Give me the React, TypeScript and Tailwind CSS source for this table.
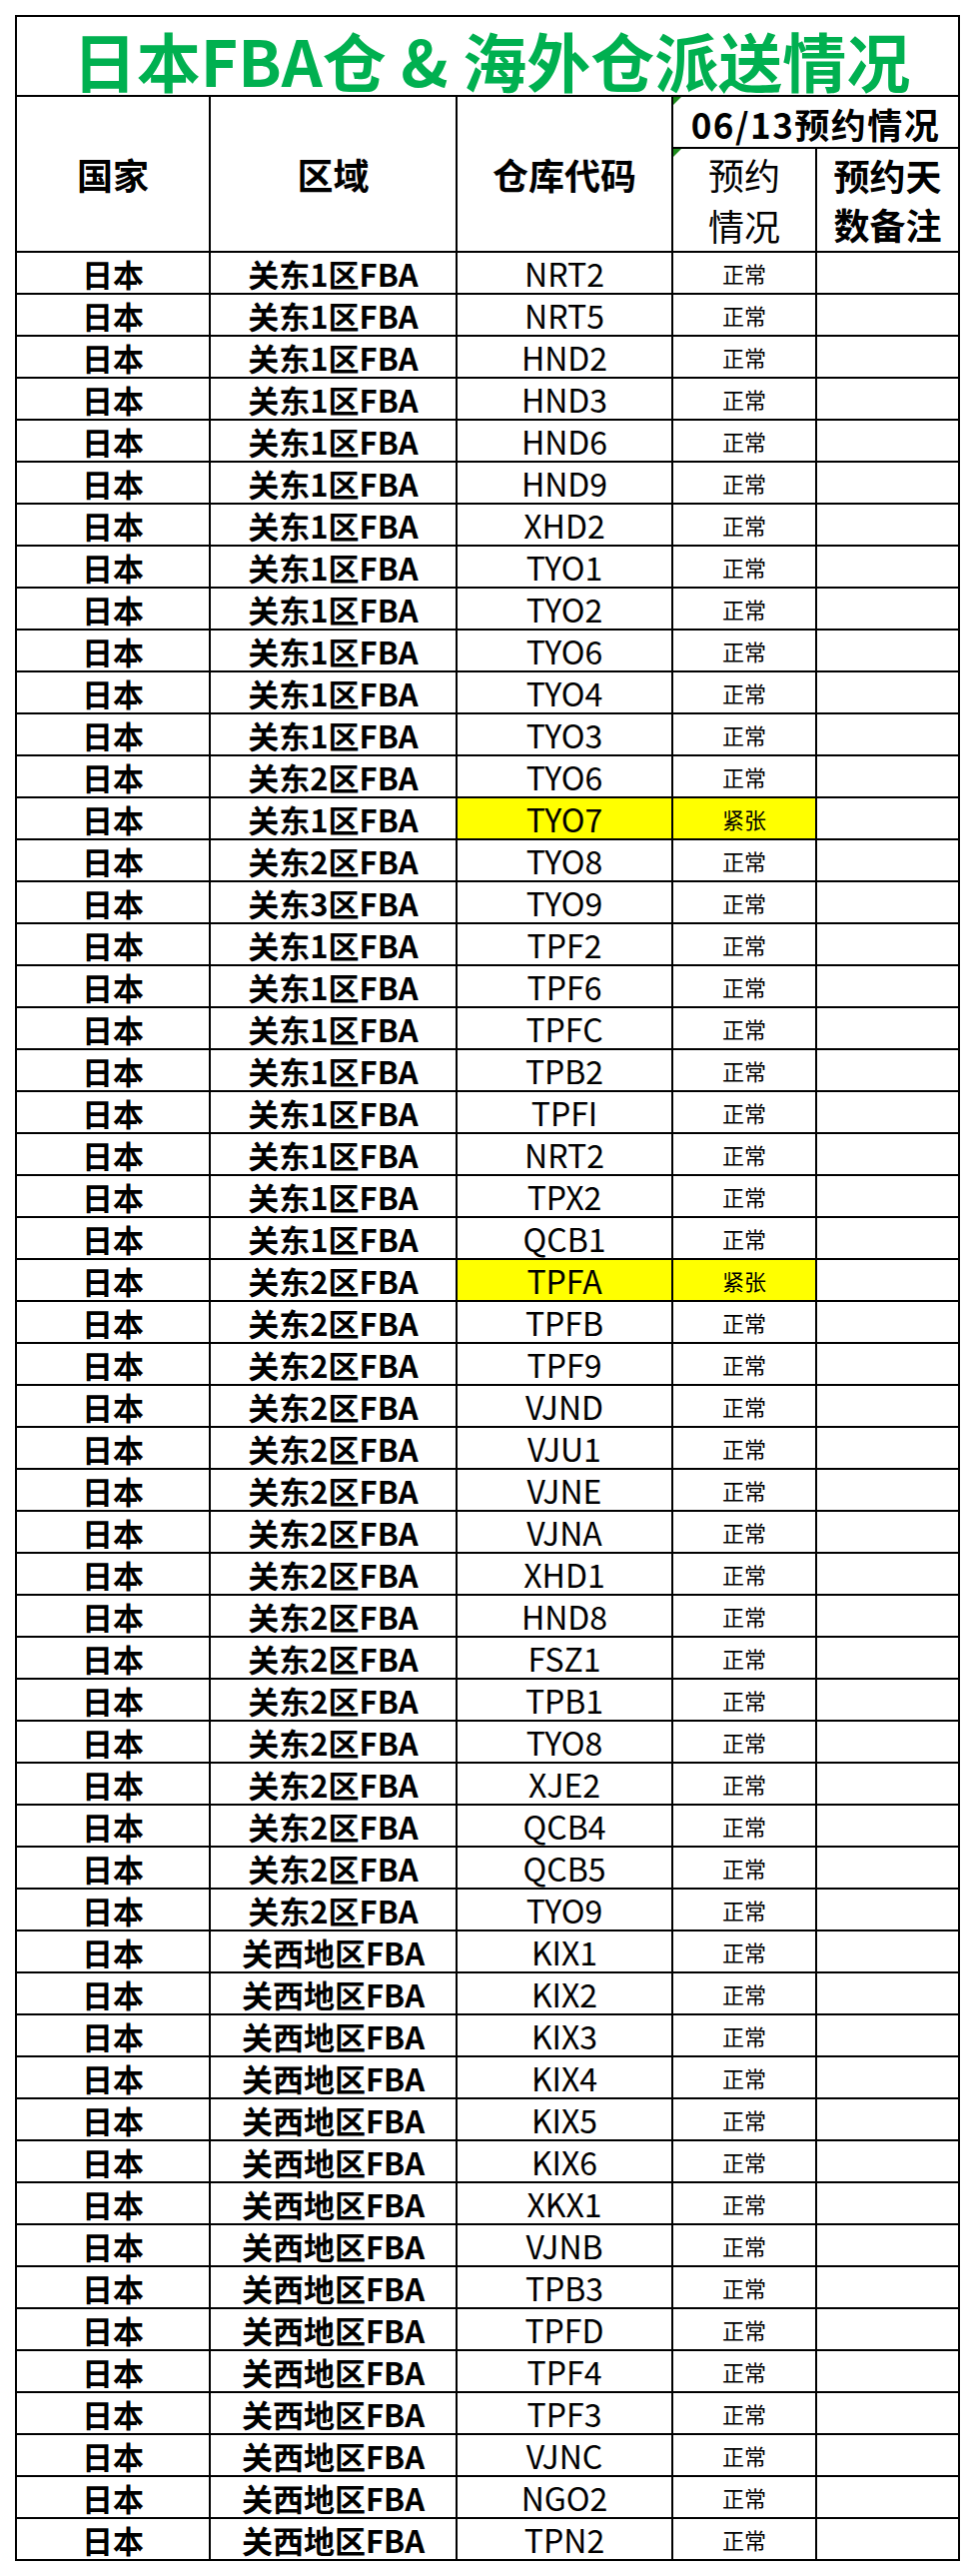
import React from "react";

type Row = [string, string, string];

const K1 = "关东1区FBA";
const K2 = "关东2区FBA";
const K3 = "关东3区FBA";
const KS = "关西地区FBA";

const rows: Row[] = [
  [K1, "NRT2", "正常"],
  [K1, "NRT5", "正常"],
  [K1, "HND2", "正常"],
  [K1, "HND3", "正常"],
  [K1, "HND6", "正常"],
  [K1, "HND9", "正常"],
  [K1, "XHD2", "正常"],
  [K1, "TYO1", "正常"],
  [K1, "TYO2", "正常"],
  [K1, "TYO6", "正常"],
  [K1, "TYO4", "正常"],
  [K1, "TYO3", "正常"],
  [K2, "TYO6", "正常"],
  [K1, "TYO7", "紧张"],
  [K2, "TYO8", "正常"],
  [K3, "TYO9", "正常"],
  [K1, "TPF2", "正常"],
  [K1, "TPF6", "正常"],
  [K1, "TPFC", "正常"],
  [K1, "TPB2", "正常"],
  [K1, "TPFI", "正常"],
  [K1, "NRT2", "正常"],
  [K1, "TPX2", "正常"],
  [K1, "QCB1", "正常"],
  [K2, "TPFA", "紧张"],
  [K2, "TPFB", "正常"],
  [K2, "TPF9", "正常"],
  [K2, "VJND", "正常"],
  [K2, "VJU1", "正常"],
  [K2, "VJNE", "正常"],
  [K2, "VJNA", "正常"],
  [K2, "XHD1", "正常"],
  [K2, "HND8", "正常"],
  [K2, "FSZ1", "正常"],
  [K2, "TPB1", "正常"],
  [K2, "TYO8", "正常"],
  [K2, "XJE2", "正常"],
  [K2, "QCB4", "正常"],
  [K2, "QCB5", "正常"],
  [K2, "TYO9", "正常"],
  [KS, "KIX1", "正常"],
  [KS, "KIX2", "正常"],
  [KS, "KIX3", "正常"],
  [KS, "KIX4", "正常"],
  [KS, "KIX5", "正常"],
  [KS, "KIX6", "正常"],
  [KS, "XKX1", "正常"],
  [KS, "VJNB", "正常"],
  [KS, "TPB3", "正常"],
  [KS, "TPFD", "正常"],
  [KS, "TPF4", "正常"],
  [KS, "TPF3", "正常"],
  [KS, "VJNC", "正常"],
  [KS, "NGO2", "正常"],
  [KS, "TPN2", "正常"],
];

const font = { fontFamily: '"Noto Sans CJK SC", "Noto Sans", sans-serif' };

function Tri() {
  return (
    <span className="absolute left-0 top-0 h-0 w-0 border-t-[8px] border-r-[8px] border-t-[#1e8c1e] border-r-transparent" />
  );
}

export default function App() {
  return (
    <div className="min-h-[2578px] w-[976px] bg-white pt-[15px] pl-[15px]" style={font}>
      <div className="grid w-[946px] grid-cols-[192px_245px_214px_142px_141px] grid-rows-[78px_50px_102px] auto-rows-[40px] gap-[2px] bg-black p-[2px] text-black">
        <div className="col-span-5 flex items-center justify-center bg-white pt-[6px] pl-[8px] text-[64px] font-bold leading-none text-[#00b050]">
          日本FBA仓 &amp; 海外仓派送情况
        </div>

        <div className="row-span-2 flex items-center justify-center bg-white text-[36px] font-bold">国家</div>
        <div className="row-span-2 flex items-center justify-center bg-white text-[36px] font-bold">区域</div>
        <div className="row-span-2 flex items-center justify-center bg-white text-[36px] font-bold">仓库代码</div>
        <div className="relative col-span-2 flex items-center justify-center bg-white pt-[2px] text-[35px] font-bold leading-none tracking-[1.5px]">
          <Tri />
          06/13预约情况
        </div>
        <div className="relative flex flex-col items-center justify-center bg-white text-[36px] leading-[51px]">
          <Tri />
          <span>预约</span>
          <span>情况</span>
        </div>
        <div className="flex flex-col items-center justify-center bg-white text-[36px] font-bold leading-[49px]">
          <span>预约天</span>
          <span>数备注</span>
        </div>

        {rows.map(([region, code, status], i) => {
          const hot = status === "紧张";
          return (
            <React.Fragment key={i}>
              <div className="flex items-center justify-center bg-white text-[31px] font-bold leading-none">日本</div>
              <div className="flex items-center justify-center bg-white text-[31px] font-bold leading-none">{region}</div>
              <div className={`flex items-center justify-center text-[32px] leading-none ${hot ? "bg-[#ffff00]" : "bg-white"}`}>
                {code}
              </div>
              <div className={`flex items-center justify-center text-[22px] leading-none ${hot ? "bg-[#ffff00]" : "bg-white"}`}>
                {status}
              </div>
              <div className="bg-white" />
            </React.Fragment>
          );
        })}
      </div>
    </div>
  );
}
